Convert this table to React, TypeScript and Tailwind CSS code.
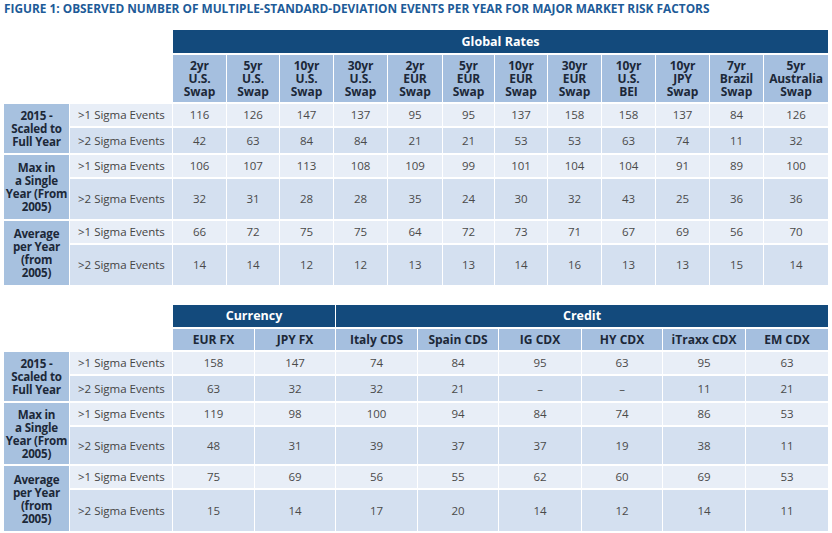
const topCols = [
  '2yr U.S. Swap',
  '5yr U.S. Swap',
  '10yr U.S. Swap',
  '30yr U.S. Swap',
  '2yr EUR Swap',
  '5yr EUR Swap',
  '10yr EUR Swap',
  '30yr EUR Swap',
  '10yr U.S. BEI',
  '10yr JPY Swap',
  '7yr Brazil Swap',
  '5yr Australia Swap',
]
const topWidths = [53, 52, 53, 53, 54, 51, 52, 53, 53, 53, 53, 64]

const topGroups = [
  {
    label: ['2015 -', 'Scaled to', 'Full Year'],
    heights: [22, 25],
    rows: [
      [116, 126, 147, 137, 95, 95, 137, 158, 158, 137, 84, 126],
      [42, 63, 84, 84, 21, 21, 53, 53, 63, 74, 11, 32],
    ],
  },
  {
    label: ['Max in', 'a Single', 'Year (From', '2005)'],
    heights: [22, 40],
    rows: [
      [106, 107, 113, 108, 109, 99, 101, 104, 104, 91, 89, 100],
      [32, 31, 28, 28, 35, 24, 30, 32, 43, 25, 36, 36],
    ],
  },
  {
    label: ['Average', 'per Year', '(from', '2005)'],
    heights: [22, 40],
    rows: [
      [66, 72, 75, 75, 64, 72, 73, 71, 67, 69, 56, 70],
      [14, 14, 12, 12, 13, 13, 14, 16, 13, 13, 15, 14],
    ],
  },
]

const bottomCols = ['EUR FX', 'JPY FX', 'Italy CDS', 'Spain CDS', 'IG CDX', 'HY CDX', 'iTraxx CDX', 'EM CDX']
const bottomWidths = [81, 80, 81, 80, 82, 80, 82, 82]

const bottomGroups = [
  {
    label: ['2015 -', 'Scaled to', 'Full Year'],
    heights: [22, 25],
    rows: [
      ['158', '147', '74', '84', '95', '63', '95', '63'],
      ['63', '32', '32', '21', '–', '–', '11', '21'],
    ],
  },
  {
    label: ['Max in', 'a Single', 'Year (From', '2005)'],
    heights: [22, 37],
    rows: [
      ['119', '98', '100', '94', '84', '74', '86', '53'],
      ['48', '31', '39', '37', '37', '19', '38', '11'],
    ],
  },
  {
    label: ['Average', 'per Year', '(from', '2005)'],
    heights: [22, 41],
    rows: [
      ['75', '69', '56', '55', '62', '60', '69', '53'],
      ['15', '14', '17', '20', '14', '12', '14', '11'],
    ],
  },
]

const rowBg = ['bg-[#e8eef7]', 'bg-[#d4e0f0]']
const sigma = ['>1 Sigma Events', '>2 Sigma Events']

type Group = {
  label: string[]
  heights: number[]
  rows: (string | number)[][]
}

function Body({ groups }: { groups: Group[] }) {
  return (
    <tbody>
      {groups.map((g) =>
        g.rows.map((row, ri) => (
          <tr key={g.label[0] + ri} style={{ height: g.heights[ri] }}>
            {ri === 0 && (
              <td
                rowSpan={2}
                className="overflow-hidden whitespace-nowrap bg-[#a7c1df] p-0 text-center align-middle text-[11.6px] font-bold leading-[13px] tracking-[-0.2px] text-[#1c2838]"
              >
                {g.label.map((l) => (
                  <div key={l}>{l}</div>
                ))}
              </td>
            )}
            <td className={`${rowBg[ri]} p-0 pl-2 align-middle text-[11.5px] leading-4 text-[#444]`}>{sigma[ri]}</td>
            {row.map((v, ci) => (
              <td key={ci} className={`${rowBg[ri]} p-0 text-center align-middle text-[11.5px] leading-4 text-[#4a4a4a]`}>
                {v}
              </td>
            ))}
          </tr>
        ))
      )}
    </tbody>
  )
}

export default function App() {
  return (
    <div className="h-[533px] w-[832px] overflow-hidden bg-white font-['Open_Sans',sans-serif]">
      <div className="pl-1 text-[11.85px] font-bold leading-4 text-[#1d5b98]">
        FIGURE 1: OBSERVED NUMBER OF MULTIPLE-STANDARD-DEVIATION EVENTS PER YEAR FOR MAJOR MARKET RISK FACTORS
      </div>

      <table className="mt-3 ml-[3px] w-[826px] table-fixed border-separate border-spacing-x-[1px] border-spacing-y-[2px]">
        <colgroup>
          <col style={{ width: 65 }} />
          <col style={{ width: 102 }} />
          {topWidths.map((w, i) => (
            <col key={i} style={{ width: w }} />
          ))}
        </colgroup>
        <thead>
          <tr className="h-[23px]">
            <td colSpan={2} className="p-0" />
            <th colSpan={12} className="bg-[#134a7c] p-0 text-center text-[12.5px] font-bold leading-4 text-white">
              Global Rates
            </th>
          </tr>
          <tr className="h-[47px]">
            <td colSpan={2} className="p-0" />
            {topCols.map((c) => (
              <th
                key={c}
                className="whitespace-nowrap bg-[#a5bfdf] p-0 text-center align-middle text-[12px] font-bold leading-[13px] tracking-[-0.1px] text-[#1c2838]"
              >
                {c.split(' ').map((w) => (
                  <div key={w}>{w}</div>
                ))}
              </th>
            ))}
          </tr>
        </thead>
        <Body groups={topGroups} />
      </table>

      <table className="mt-4 ml-[3px] w-[826px] table-fixed border-separate border-spacing-x-[1px] border-spacing-y-[2px]">
        <colgroup>
          <col style={{ width: 65 }} />
          <col style={{ width: 102 }} />
          {bottomWidths.map((w, i) => (
            <col key={i} style={{ width: w }} />
          ))}
        </colgroup>
        <thead>
          <tr className="h-[22px]">
            <td colSpan={2} className="p-0" />
            <th colSpan={2} className="bg-[#134a7c] p-0 text-center text-[12.5px] font-bold leading-4 text-white">
              Currency
            </th>
            <th colSpan={6} className="bg-[#134a7c] p-0 text-center text-[12.5px] font-bold leading-4 text-white">
              Credit
            </th>
          </tr>
          <tr className="h-[21px]">
            <td colSpan={2} className="p-0" />
            {bottomCols.map((c) => (
              <th key={c} className="bg-[#a5bfdf] p-0 text-center align-middle text-[12px] font-bold leading-4 text-[#1c2838]">
                {c}
              </th>
            ))}
          </tr>
        </thead>
        <Body groups={bottomGroups} />
      </table>
    </div>
  )
}
